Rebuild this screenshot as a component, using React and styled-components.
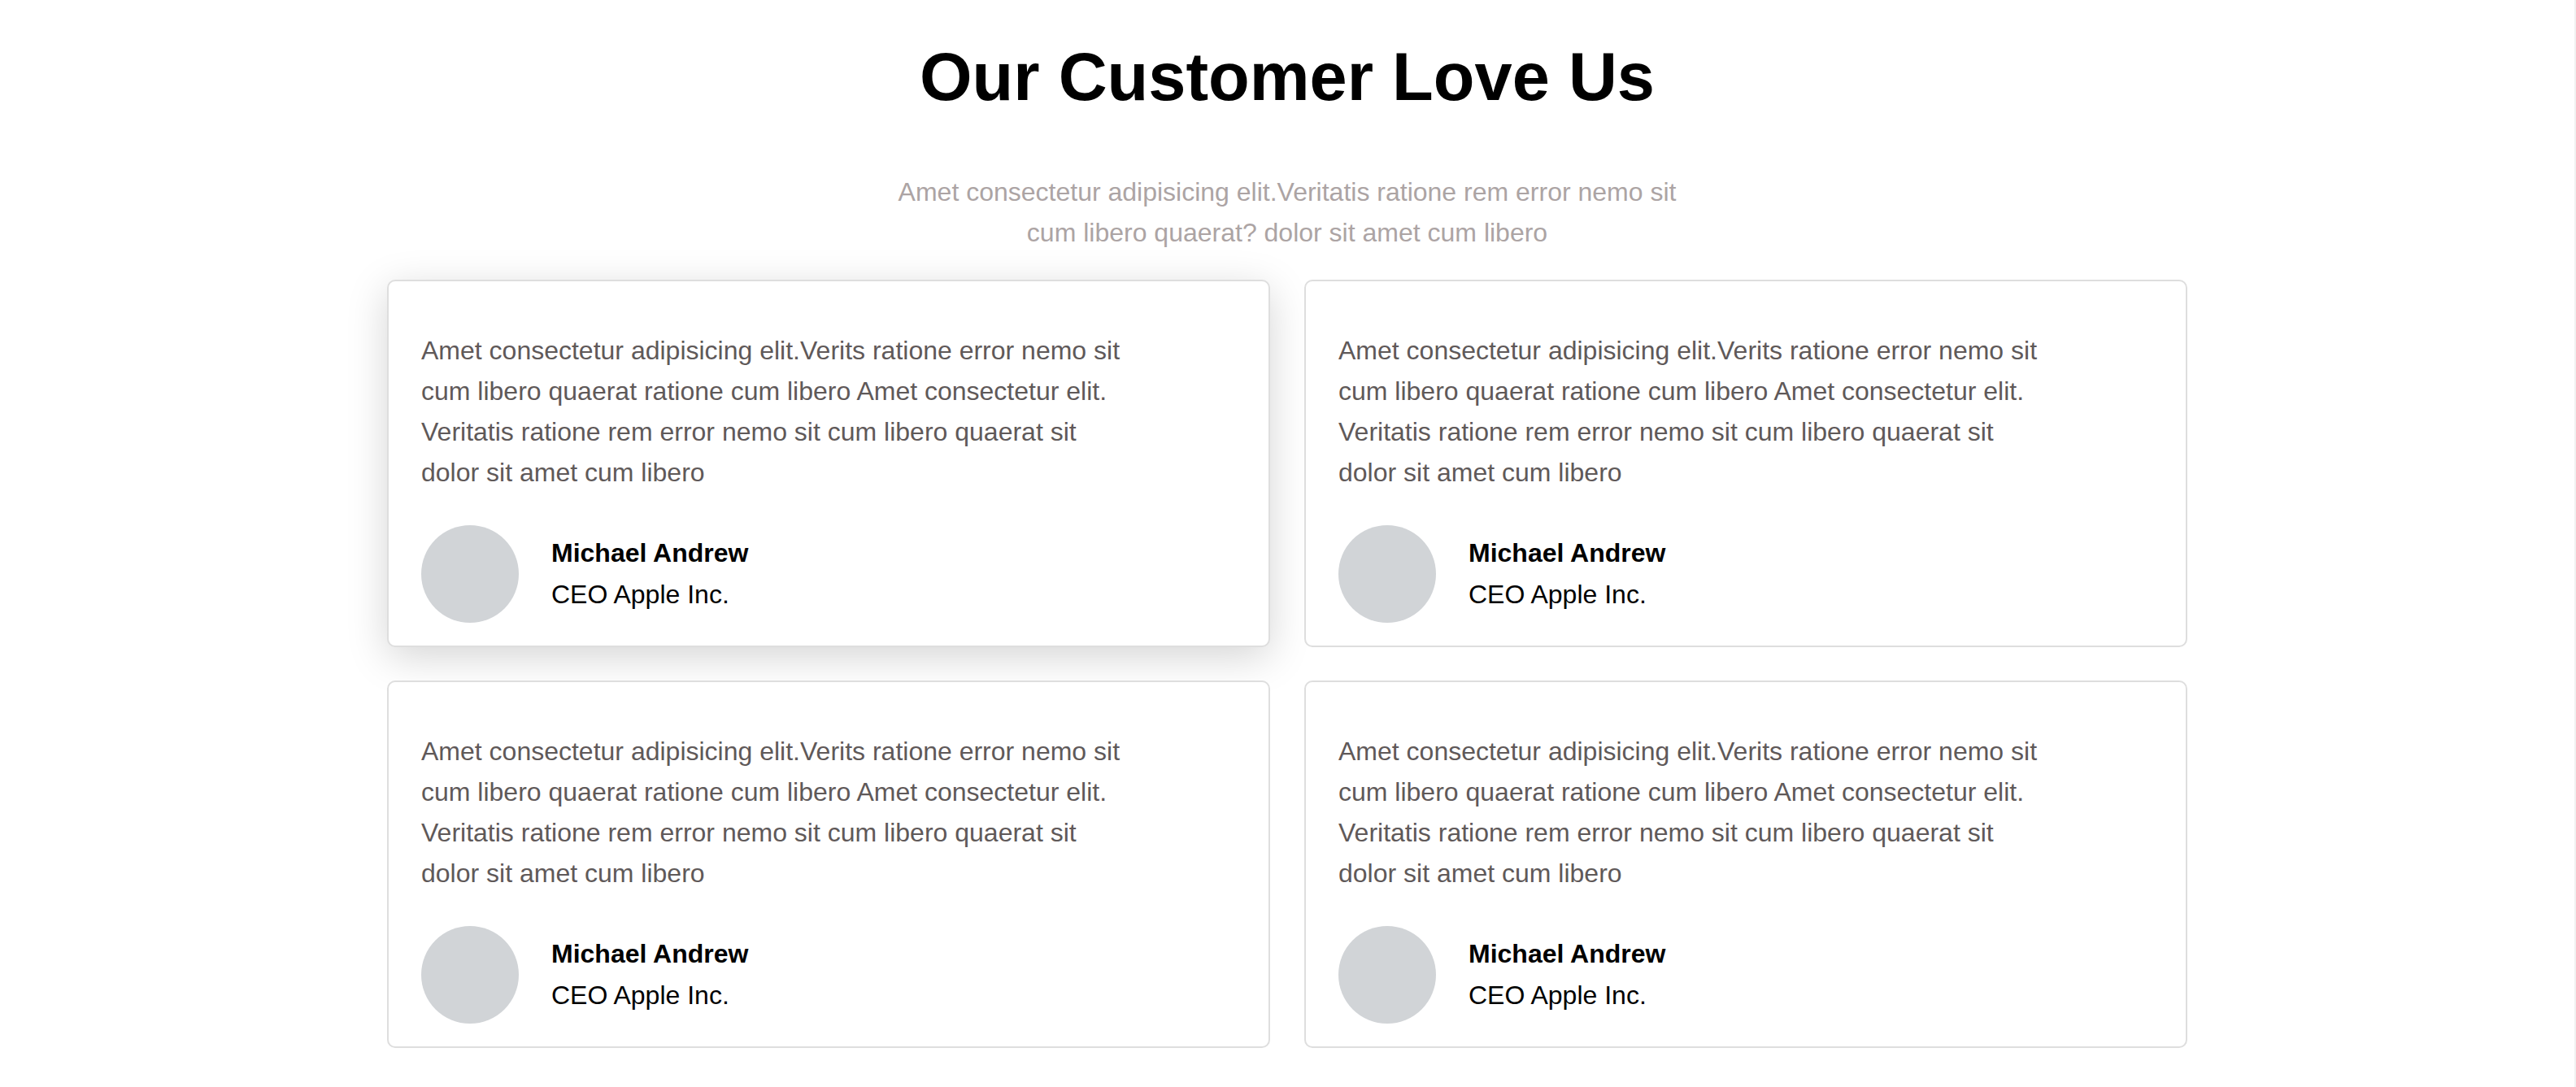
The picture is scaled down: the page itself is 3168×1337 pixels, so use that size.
import React from 'react';
import styled, {createGlobalStyle} from "styled-components";

const GlobalStyle = createGlobalStyle`
  html, body {
    margin: 0;
    padding: 0;
    background: #fff;
  }
  body {
    font-family: "Liberation Sans", Arial, sans-serif;
    border-right: 2px solid #f1f1f1;
    min-height: 100vh;
    box-sizing: border-box;
  }
`;

const Section = styled.section`
  padding: 47px 0 48px;
  display: flex;
  flex-direction: column;
  align-items: center;
`;

const Title = styled.h1`
  margin: 0;
  font-size: 83px;
  line-height: 95px;
  font-weight: 700;
  color: #000;
  text-align: center;
`;

const Subtitle = styled.p`
  margin: 69px 0 0;
  max-width: 1000px;
  font-size: 32px;
  line-height: 50px;
  color: #aca4a4;
  text-align: center;
`;

const Grid = styled.div`
  margin-top: 33px;
  width: 2214px;
  display: grid;
  grid-template-columns: 1fr 1fr;
  gap: 41px 42px;
`;

const Card = styled.div`
  background: #fff;
  border: 2px solid #dedede;
  border-radius: 10px;
  padding: 60px 40px 28px;
  box-shadow: ${props => props.raised ? "0 12px 50px rgba(0, 0, 0, 0.17)" : "none"};
`;

const Quote = styled.p`
  margin: 0;
  max-width: 870px;
  font-size: 32px;
  line-height: 50px;
  color: #5f5959;
`;

const Author = styled.div`
  margin-top: 40px;
  display: flex;
  align-items: center;
  gap: 40px;
`;

const Avatar = styled.div`
  width: 120px;
  height: 120px;
  border-radius: 50%;
  background: #d1d4d7;
  flex-shrink: 0;
`;

const Name = styled.div`
  font-size: 32px;
  line-height: 51px;
  font-weight: 700;
  color: #000;
`;

const Role = styled.div`
  font-size: 32px;
  line-height: 51px;
  color: #000;
`;

const testimonials = [
  {id: 1, raised: true},
  {id: 2},
  {id: 3},
  {id: 4},
];

const QUOTE = "Amet consectetur adipisicing elit.Verits ratione error nemo sit cum libero quaerat ratione cum libero Amet consectetur elit. Veritatis ratione rem error nemo sit cum libero quaerat sit dolor sit amet cum libero";

const App = () => {
  return (
    <Section>
      <GlobalStyle/>
      <Title>Our Customer Love Us</Title>
      <Subtitle>
        Amet consectetur adipisicing elit.Veritatis ratione rem error nemo sit cum libero quaerat? dolor sit amet cum libero
      </Subtitle>

      <Grid>
        {testimonials.map(item => (
          <Card key={item.id} raised={item.raised}>
            <Quote>{QUOTE}</Quote>
            <Author>
              <Avatar/>
              <div>
                <Name>Michael Andrew</Name>
                <Role>CEO Apple Inc.</Role>
              </div>
            </Author>
          </Card>
        ))}
      </Grid>
    </Section>
  );
}

export default App;
